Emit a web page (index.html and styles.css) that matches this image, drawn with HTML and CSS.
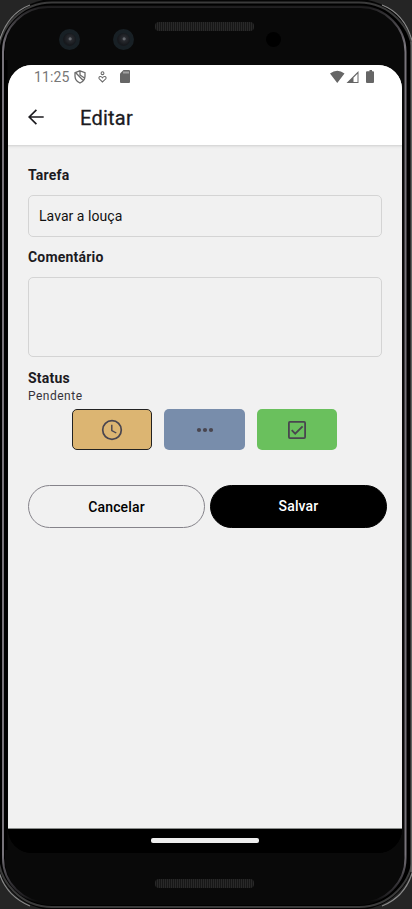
FILE: index.html
```html
<!DOCTYPE html>
<html lang="pt-BR">
<head>
<meta charset="utf-8">
<title>Editar</title>
<link rel="stylesheet" href="styles.css">
</head>
<body>
<div class="device">
  <svg class="frame" width="412" height="909" viewBox="0 0 412 909" fill="none">
    <defs>
      <linearGradient id="rim" x1="0" y1="0" x2="0" y2="909" gradientUnits="userSpaceOnUse"><stop offset="0" stop-color="#6b676e" stop-opacity="0"/><stop offset=".012" stop-color="#6b676e" stop-opacity=".35"/><stop offset=".05" stop-color="#77737a"/><stop offset=".94" stop-color="#77737a"/><stop offset=".985" stop-color="#555159" stop-opacity=".35"/><stop offset=".992" stop-color="#555159" stop-opacity="0"/></linearGradient>
    </defs>
    <rect x="-4" y="-1" width="419" height="911" rx="58" fill="#050505"/>
    <rect x="-2" y="2.500" width="415" height="904.500" rx="54" fill="#000" stroke="#3b3b3b" stroke-width="2"/>
    <rect x="5" y="5" width="400" height="900" rx="46" fill="#090909"/>
    <path d="M-1 42Q7 14 30 5M-1 872Q6 896 30 906M382 5Q405 14 412.500 42M382 906Q405 897 412.500 872" stroke="#8a8a8a" stroke-width="1.200"/>
    <path d="M411.500 42V872" stroke="#626262" stroke-width="2"/>
    <path d="M5.500 60V850" stroke="#000" stroke-width="4"/>
    <rect x="3" y="7" width="402.500" height="896" rx="45" stroke="url(#rim)" stroke-width="2"/>
  </svg>
  <header class="hardware">
    <div class="lenses"><i class="lens"></i><i class="lens"></i></div>
    <i class="speaker"></i>
    <i class="sensor"></i>
  </header>
  <main class="screen">
    <div class="statusbar">
      <span class="time">11:25</span>
      <svg class="shield" width="12" height="14" viewBox="0 0 12 14" fill="none" stroke="#6b6b6b" stroke-width="1.300"><path d="M6 .8L11 2.600V6.200Q10.800 10.800 6 13Q1.200 10.800 1 6.200V2.600ZM2 3L9.200 10.500M6 1.500V5L10.500 8"/></svg>
      <svg class="heart" width="9" height="12" viewBox="0 0 9 12" fill="none" stroke="#6b6b6b" stroke-width="1.100"><circle cx="4.500" cy="2.200" r="1.400"/><path d="M4.500 11L1.200 7.800Q.4 6 2 5.500Q3.500 5.200 4.500 6.700Q5.500 5.200 7 5.500Q8.600 6 7.800 7.800Z"/></svg>
      <svg class="card" width="10" height="13" viewBox="0 0 10 13"><path fill="#666" d="M3.500 0H9Q10 0 10 1V12Q10 13 9 13H1Q0 13 0 12V3.500Z"/><path d="M4 1.500V3.500M6 1.500V3.500M8 1.500V3.500" stroke="#ddd"/></svg>
      <svg class="signals" width="45" height="14" viewBox="0 0 45 14"><path fill="#666" d="M0 3.500Q7.250-2 14.500 3.500L7.250 13ZM16.500 13L28.500 1V13ZM38 1.200H39.500V0H42V1.200H43Q44 1.200 44 2.200V12Q44 13 43 13H37Q36 13 36 12V2.200Q36 1.200 37 1.200Z"/><path fill="#fff" d="M23.500 7.800L27.500 3.800V12H23.500Z"/></svg>
    </div>
    <div class="appbar">
      <svg width="16" height="16" viewBox="0 0 16 16" fill="none" stroke="#1c1b1f" stroke-width="1.700"><path d="M15.700 8H1.500M8.400 .8L1.200 8L8.400 15.200"/></svg>
      <h1>Editar</h1>
    </div>
    <form class="form">
      <label class="label" for="task">Tarefa</label>
      <input class="field" id="task" value="Lavar a louça">
      <label class="label second" for="comment">Comentário</label>
      <textarea class="field comment" id="comment"></textarea>
      <div class="label status">Status</div>
      <div class="state">Pendente</div>
      <div class="choices">
        <button type="button" class="choice pending"><svg width="22" height="22" viewBox="0 0 22 22" fill="none" stroke="#49454f" stroke-width="1.700"><circle cx="11" cy="11" r="9.300"/><path d="M10.800 5.800V11.500L15.300 14" stroke-width="1.400"/></svg></button>
        <button type="button" class="choice progress"><svg width="18" height="6" viewBox="0 0 18 6" fill="#49454f"><circle cx="3" cy="3" r="2.100"/><circle cx="9" cy="3" r="2.100"/><circle cx="15" cy="3" r="2.100"/></svg></button>
        <button type="button" class="choice done"><svg width="20" height="20" viewBox="0 0 20 20" fill="none" stroke="#49454f" stroke-width="1.800"><rect x="1.900" y="1.900" width="16.200" height="16.200" rx="1"/><path d="M4.700 10.200L8.200 13.700L15.600 6.300"/></svg></button>
      </div>
      <div class="actions">
        <button type="button" class="action">Cancelar</button>
        <button type="button" class="action save">Salvar</button>
      </div>
    </form>
    <div class="navbar"><i class="handle"></i></div>
  </main>
  <footer class="bottom"><i class="speaker"></i></footer>
</div>
</body>
</html>
```
FILE: styles.css
```css
* { box-sizing: border-box; }
body { margin: 0; background: #252525; font-family: Roboto, sans-serif; }
.device { position: relative; width: 412px; height: 909px; overflow: hidden; padding: 0 10px 0 8px; }
.frame { position: absolute; left: 0; top: 0; z-index: -1; }
.hardware { height: 65px; display: grid; grid-template-columns: 147px 99px 1fr; align-items: start; }
.lenses { display: flex; gap: 33px; padding: 29px 0 0 51px; }
.lens { width: 21px; height: 21px; border-radius: 50%; border: 4px solid #182025; background: radial-gradient(circle at 55% 45%, #65686d 0 1px, #292b30 2px, #17191d 6px); }
.speaker { display: block; width: 99px; height: 9px; margin-top: 22px; border-radius: 4px; background: repeating-linear-gradient(90deg, #292929 0 1px, #171717 1px 2px); }
.sensor { width: 15px; height: 15px; margin: 32px 0 0 12px; border-radius: 50%; background: #000; }
.screen { width: 394px; height: 788px; border-radius: 24px; overflow: hidden; background: linear-gradient(#f1f1f1 0 90%, #000 97%); display: flex; flex-direction: column; }
.statusbar { position: relative; z-index: 1; height: 24px; background: #fff; display: flex; align-items: flex-start; padding: 5px 27px 0 26px; }
.time { font-size: 14px; line-height: 14px; letter-spacing: .1px; color: #777; width: 40px; }
.heart { margin: 1px 0 0 12px; }
.card { margin-left: 13px; }
.signals { margin-left: auto; }
.appbar { flex: none; height: 56px; background: #fff; display: flex; align-items: center; gap: 36px; padding: 0 20px; box-shadow: 0 1px 3px #ccc; }
h1 { font-size: 20px; line-height: 24px; font-weight: 400; -webkit-text-stroke: .3px #1c1b1f; letter-spacing: .25px; margin: 2px 0 0; color: #1c1b1f; }
.form { flex: 1; background: #f1f1f1; padding: 20px 15px 0 20px; display: flex; flex-direction: column; box-shadow: inset 0 3px 3px -2px #ccc; }
.label { font-size: 14px; line-height: 20px; font-weight: 700; letter-spacing: .2px; color: #1c1b1f; }
.field { width: 354px; height: 42px; margin: 10px 0 0; padding: 0 10px; border: 1px solid #d4d4d4; border-radius: 5px; background: transparent; font: 14px Roboto, sans-serif; letter-spacing: .05px; color: #111; resize: none; outline: 0; }
.second { margin-top: 10px; }
.comment { height: 80px; }
.status { margin-top: 11px; }
.state { font-size: 12px; line-height: 16px; letter-spacing: .5px; color: #35333a; }
.choices { display: flex; gap: 12px; width: 265px; margin: 5px 0 0 44px; }
.choice { width: 81px; height: 41px; padding: 0; border: 0; border-radius: 5px; display: flex; align-items: center; justify-content: center; }
.pending { background: #dcb572; border: 1px solid #222; }
.progress { background: #788dab; }
.done { background: #6ac05d; }
.actions { display: grid; grid-template-columns: 1fr 1fr; gap: 5px; margin-top: 35px; }
.action { height: 43px; padding: 0; border: 1px solid #85838a; border-radius: 22px; background: transparent; font: 500 14px Roboto, sans-serif; letter-spacing: .15px; color: #000; }
.save { background: #000; border-color: #000; color: #fff; padding-bottom: 2px; }
.navbar { height: 25px; background: #000; border-top: 1px solid #8a8d8b; display: flex; justify-content: center; padding-top: 9px; }
.handle { width: 108px; height: 5px; margin-right: 1px; background: #eee; border-radius: 2px; }
.bottom { padding: 4px 0 0 147px; }
```
